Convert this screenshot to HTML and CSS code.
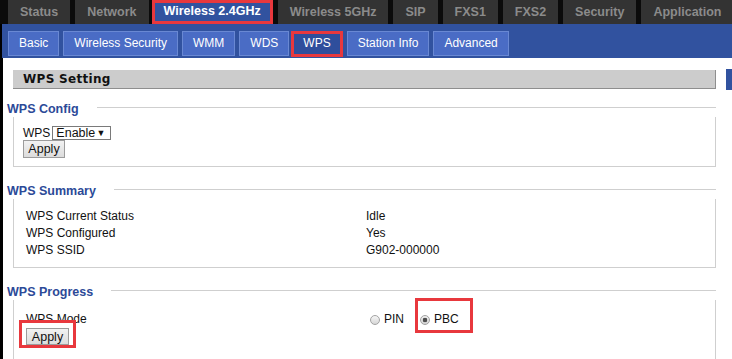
FILE: index.html
```html
<!DOCTYPE html>
<html lang="en">
<head>
<meta charset="utf-8">
<title>WPS Setting</title>
<link rel="stylesheet" href="styles.css">
</head>
<body>
<nav class="topnav">
  <a class="tab">Status</a>
  <a class="tab">Network</a>
  <a class="tab active">Wireless 2.4GHz</a>
  <a class="tab">Wireless 5GHz</a>
  <a class="tab">SIP</a>
  <a class="tab">FXS1</a>
  <a class="tab">FXS2</a>
  <a class="tab">Security</a>
  <a class="tab">Application</a>
</nav>
<nav class="subnav">
  <a class="sub">Basic</a>
  <a class="sub">Wireless Security</a>
  <a class="sub">WMM</a>
  <a class="sub">WDS</a>
  <a class="sub active">WPS</a>
  <a class="sub">Station Info</a>
  <a class="sub">Advanced</a>
</nav>
<div class="page">
  <main class="content">
    <h2 class="page-title">WPS Setting</h2>

    <section class="group">
      <div class="group-head"><span class="group-title">WPS Config</span><span class="group-rule"></span></div>
      <div class="group-body config">
        <div class="field">
          <span class="field-label">WPS</span>
          <span class="select-wrap"><select class="select"><option>Enable</option><option>Disable</option></select></span>
        </div>
        <button class="btn">Apply</button>
      </div>
    </section>

    <section class="group">
      <div class="group-head"><span class="group-title">WPS Summary</span><span class="group-rule"></span></div>
      <div class="group-body summary">
        <div class="kv">
          <span>WPS Current Status</span><span>Idle</span>
          <span>WPS Configured</span><span>Yes</span>
          <span>WPS SSID</span><span>G902-000000</span>
        </div>
      </div>
    </section>

    <section class="group">
      <div class="group-head"><span class="group-title">WPS Progress</span><span class="group-rule"></span></div>
      <div class="group-body progress">
        <div class="kv">
          <span>WPS Mode</span>
          <span class="radios">
            <label class="choice"><input type="radio" name="mode" class="radio">PIN</label>
            <label class="choice"><input type="radio" name="mode" class="radio" checked>PBC<span class="annot annot-pbc"></span></label>
          </span>
        </div>
        <span class="btn-wrap"><button class="btn btn-small">Apply</button><span class="annot annot-apply"></span></span>
      </div>
    </section>
  </main>
  <aside class="side"><div class="side-block"></div></aside>
</div>
</body>
</html>
```
FILE: styles.css
```css
* { box-sizing: border-box; }
html, body { margin: 0; height: 100%; }
body {
  background: #000;
  font-family: "Liberation Sans", Arial, sans-serif;
  font-size: 12px;
  color: #111;
  overflow: hidden;
}

/* top tabs */
.topnav {
  display: flex;
  gap: 5px;
  height: 24px;
  padding-left: 8px;
  background: #0b0b0b;
}
.tab {
  display: block;
  padding: 0 12px;
  line-height: 24px;
  background: #333;
  color: #8b8b8b;
  font-weight: bold;
  font-size: 12.5px;
  white-space: nowrap;
}
.tab.active {
  padding: 0 12px;
  margin-left: -2px;
  background: #31529f;
  color: #fff;
  line-height: 22px;
  outline: 3px solid #e8383d;
  outline-offset: -3px;
  box-shadow: 0 2px 0 #31529f;
}

/* sub tabs */
.subnav {
  display: flex;
  align-items: flex-start;
  gap: 4px;
  height: 34px;
  margin-left: 2px;
  padding: 7px 0 0 6px;
  background: #31529f;
}
.sub {
  display: block;
  height: 25px;
  padding: 0 10px;
  line-height: 23px;
  border: 1px solid #6988d3;
  background: #4a6cc5;
  color: #fff;
  font-size: 12px;
  white-space: nowrap;
}
.sub.active {
  height: 26px;
  padding: 0 11px;
  margin-left: -2px;
  background: #2f4e9c;
  border-color: #e8383d;
  outline: 2px solid #e8383d;
  outline-offset: -3px;
}

/* page */
.page {
  display: flex;
  height: calc(100% - 58px);
  margin-left: 3px;
  background: #fff;
}
.content {
  flex: 1;
  padding: 12px 10px 0 4px;
}
.side { width: 6px; }
.side-block {
  margin-top: 11px;
  height: 21px;
  background: #31529f;
}

.page-title {
  margin: 0 0 12px 6px;
  height: 19px;
  padding-left: 10px;
  background: #cccccc;
  border-bottom: 1px solid #8e8e8e;
  border-right: 1px solid #8e8e8e;
  font: bold 12px "DejaVu Sans", Verdana, sans-serif;
  letter-spacing: 0.3px;
  line-height: 18px;
  color: #111;
}

/* groups */
.group + .group { margin-top: 16px; }
.group-head {
  display: flex;
  align-items: center;
  height: 16px;
}
.group-title {
  padding-right: 18px;
  color: #2c4a98;
  font-weight: bold;
  font-size: 12.5px;
  white-space: nowrap;
}
.group-rule {
  flex: 1;
  height: 1px;
  margin-top: -3px;
  background: #cfcfcf;
}
.group-body {
  margin-left: 6px;
  border: 1px solid #cfcfcf;
  border-top: 0;
}

.config { padding: 8px 0 8px 9px; }
.field {
  display: flex;
  align-items: center;
  gap: 2px;
  height: 15px;
}
.select-wrap {
  position: relative;
  display: inline-block;
}
.select {
  appearance: none;
  -webkit-appearance: none;
  display: block;
  width: 59px;
  height: 14px;
  margin: 0;
  padding: 0 0 0 3px;
  border: 1px solid #7a7a7a;
  border-radius: 0;
  background: #fff;
  font: 12.5px "Liberation Sans", Arial, sans-serif;
  line-height: 12px;
  color: #111;
}
.select-wrap::after {
  content: "\25BC";
  position: absolute;
  right: 6px;
  top: 0;
  font-size: 9px;
  line-height: 14px;
  color: #111;
  pointer-events: none;
}

.btn {
  display: block;
  width: 42px;
  height: 18px;
  margin: 0;
  padding: 0;
  border: 1px solid #9c9c9c;
  border-radius: 0;
  background: linear-gradient(#f2f2f2, #dcdcdc);
  font: 12.5px "Liberation Sans", Arial, sans-serif;
  color: #111;
}
.btn-small { width: 43px; height: 17px; }

.kv {
  display: grid;
  grid-template-columns: 340px auto;
  line-height: 17px;
}
.summary { padding: 9px 0 8px 12px; }
.progress { padding: 11px 0 14px 12px; }

.radios {
  display: flex;
  align-items: center;
  gap: 16px;
  padding-left: 4px;
}
.choice {
  position: relative;
  display: flex;
  align-items: center;
}
.radio {
  appearance: none;
  -webkit-appearance: none;
  width: 10px;
  height: 10px;
  margin: 0 4px 0 0;
  border: 1px solid #a3a3a3;
  border-radius: 50%;
  background: linear-gradient(#f6f6f6, #d6d6d6);
}
.radio:checked {
  background: radial-gradient(circle, #4d4d4d 0 2px, transparent 2.6px), linear-gradient(#f0f0f0, #d2d2d2);
}

.btn-wrap {
  position: relative;
  display: inline-block;
}

/* red annotation boxes */
.annot {
  position: absolute;
  border: 3px solid #e8383d;
  pointer-events: none;
}
.annot-pbc { top: -13px; left: -5px; right: -14px; bottom: -5px; }
.annot-apply { top: -8px; left: -7px; right: -7px; bottom: -3px; }
```
